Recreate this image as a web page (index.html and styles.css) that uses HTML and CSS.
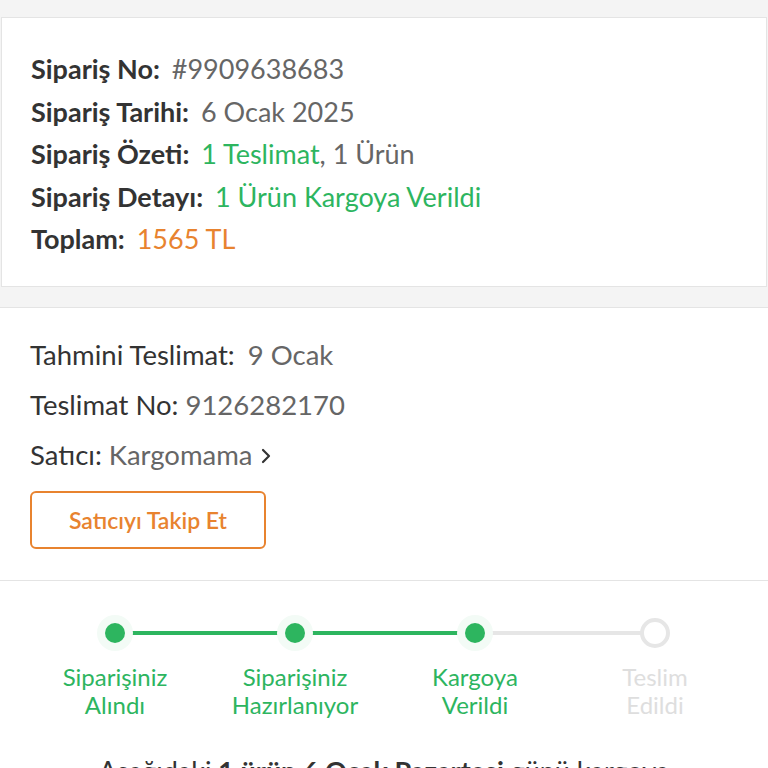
FILE: index.html
```html
<!DOCTYPE html>
<html lang="tr">
<head>
<meta charset="utf-8">
<link rel="stylesheet" href="styles.css">
</head>
<body>
<div class="page">
  <section class="card summary">
    <div class="row"><span class="lbl">Sipariş No:</span> <span class="val">#9909638683</span></div>
    <div class="row"><span class="lbl">Sipariş Tarihi:</span> <span class="val">6 Ocak 2025</span></div>
    <div class="row"><span class="lbl">Sipariş Özeti:</span> <span class="val"><span class="green">1 Teslimat</span>, 1 Ürün</span></div>
    <div class="row"><span class="lbl">Sipariş Detayı:</span> <span class="val green">1 Ürün Kargoya Verildi</span></div>
    <div class="row"><span class="lbl">Toplam:</span> <span class="val orange">1565 TL</span></div>
  </section>

  <section class="card delivery">
    <div class="row2"><span class="lbl2 wide">Tahmini Teslimat:</span> <span class="val">9 Ocak</span></div>
    <div class="row2"><span class="lbl2">Teslimat No:</span> <span class="val">9126282170</span></div>
    <div class="row2"><span class="lbl2">Satıcı:</span> <span class="val">Kargomama</span><svg class="chev" width="10" height="16" viewBox="0 0 10 16"><path d="M2 2 L8 8 L2 14" fill="none" stroke="#333" stroke-width="2.2" stroke-linecap="round" stroke-linejoin="round"/></svg></div>
    <button class="follow">Satıcıyı Takip Et</button>
  </section>

  <section class="tracking">
    <div class="steps">
      <div class="step done"><div class="track"><span class="dot"></span></div><div class="slabel">Siparişiniz<br>Alındı</div></div>
      <div class="step done"><div class="track"><span class="dot"></span></div><div class="slabel">Siparişiniz<br>Hazırlanıyor</div></div>
      <div class="step done current"><div class="track"><span class="dot"></span></div><div class="slabel">Kargoya<br>Verildi</div></div>
      <div class="step todo"><div class="track"><span class="dot"></span></div><div class="slabel">Teslim<br>Edildi</div></div>
    </div>
    <p class="note">Aşağıdaki <b>1 ürün 6 Ocak Pazartesi</b> günü kargoya verildi.</p>
  </section>
</div>
</body>
</html>
```

FILE: styles.css
```css
* { box-sizing: border-box; }
html, body { margin: 0; padding: 0; }
body {
  background: #f4f4f4;
  font-family: Lato, "Noto Sans", sans-serif;
  color: #333;
  width: 768px;
  height: 768px;
  overflow: hidden;
}
.page { padding-top: 17px; }
.card {
  background: #fff;
  border-top: 1px solid #e4e4e4;
  border-bottom: 1px solid #e4e4e4;
}
.summary {
  margin: 0 1px;
  border-left: 1px solid #e4e4e4;
  border-right: 1px solid #e4e4e4;
  padding: 30px 29px 17px;
  height: 270px;
}
.row {
  font-size: 27px;
  line-height: 42.5px;
  white-space: nowrap;
}
.lbl { font-weight: 700; color: #333; margin-right: 5px; }
.val { color: #666; }
.green { color: #2db55f; }
.orange { color: #e8832f; }

.delivery {
  margin-top: 20px;
  padding: 22px 30px 30px;
  height: 274px;
}
.row2 {
  font-size: 27.5px;
  line-height: 50px;
  white-space: nowrap;
  display: flex;
  align-items: center;
}
.row2 .val { margin-left: 7px; }
.lbl2 { color: #333; }
.lbl2.wide { margin-right: 6px; }
.chev { margin-left: 8px; margin-top: 2px; }
.follow {
  margin-top: 11px;
  width: 236px;
  height: 58px;
  background: #fff;
  border: 2px solid #e8832f;
  border-radius: 6px;
  color: #e8832f;
  font-family: Lato, "Noto Sans", sans-serif;
  font-weight: 600;
  font-size: 23px;
  padding: 0;
  display: flex;
  align-items: center;
  justify-content: center;
}

.tracking {
  background: #fff;
  height: 200px;
  padding-top: 34px;
}
.steps {
  display: grid;
  grid-template-columns: repeat(4, 180px);
  margin-left: 25px;
}
.step { display: flex; flex-direction: column; align-items: center; }
.track {
  position: relative;
  width: 100%;
  height: 36px;
  display: flex;
  align-items: center;
  justify-content: center;
}
.track::before, .track::after {
  content: "";
  position: absolute;
  top: 16px;
  height: 4px;
  width: 50%;
  background: #e6e6e6;
}
.track::before { left: 0; }
.track::after { right: 0; }
.step:first-child .track::before, .step:last-child .track::after { display: none; }
.step.done .track::before, .step.done .track::after { background: #2db55f; }
.step.current .track::after { background: #e6e6e6; }
.dot {
  position: relative;
  z-index: 1;
  width: 20px;
  height: 20px;
  border-radius: 50%;
  background: #2db55f;
  box-shadow: 0 0 0 8px #f3fbf6;
}
.step.todo .dot {
  width: 30px;
  height: 30px;
  background: #fff;
  border: 4px solid #e6e6e6;
  box-shadow: none;
}
.slabel {
  margin-top: 12px;
  text-align: center;
  font-size: 24px;
  line-height: 28px;
  color: #2db55f;
}
.step.todo .slabel { color: #dedede; }
.note {
  margin: 36px 0 0;
  padding: 0 70px;
  text-align: center;
  font-size: 27px;
  line-height: 32px;
  color: #333;
}
.note b { font-weight: 700; }
```
